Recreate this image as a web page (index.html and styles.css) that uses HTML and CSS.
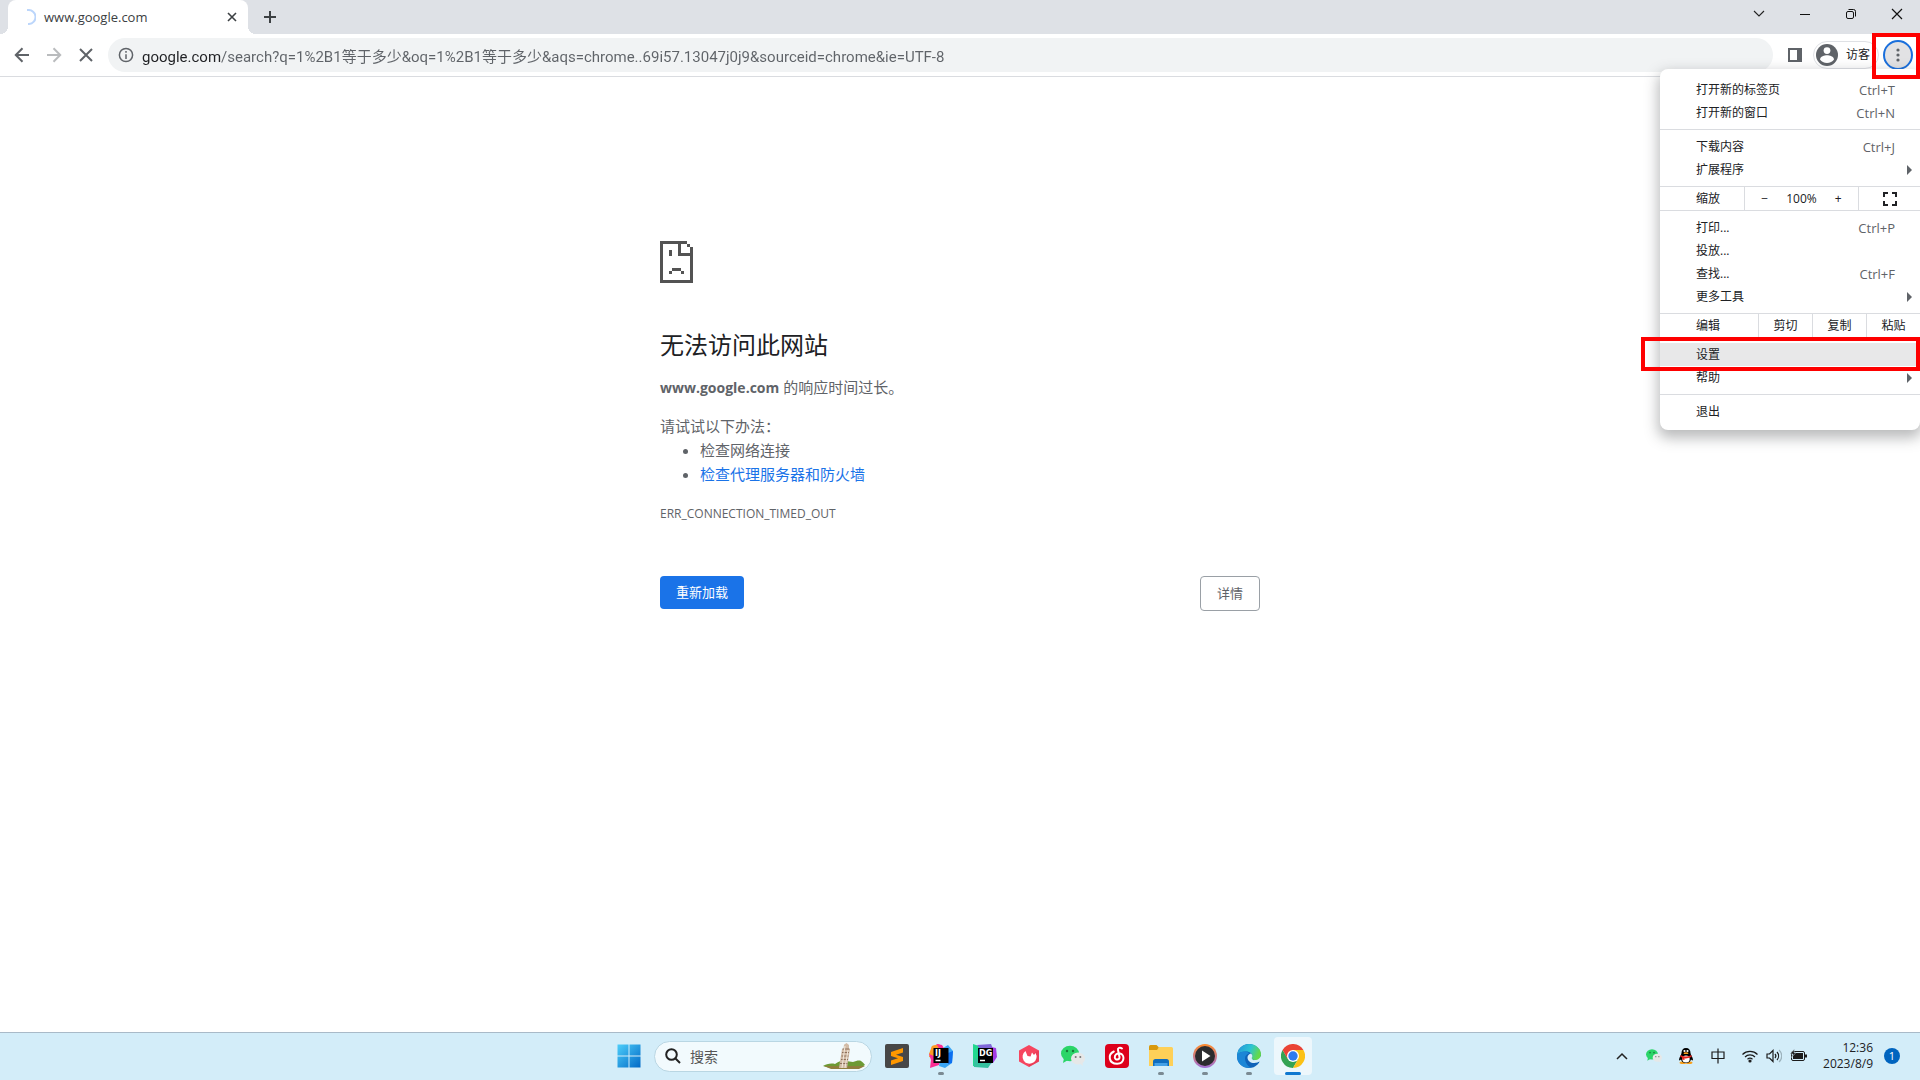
FILE: index.html
```html
<!DOCTYPE html>
<html lang="zh-CN">
<head>
<meta charset="utf-8">
<title>www.google.com</title>
<link rel="stylesheet" href="styles.css">
</head>
<body>
<header class="browser">
  <div class="tabstrip">
    <div class="tab">
      <svg class="spinner" width="16" height="16" viewBox="0 0 16 16" fill="none" stroke="#bcd6fb" stroke-width="2"><path d="M7 1h1a7 7 0 0 1 1 14h-1"/></svg>
      <span class="tab-title">www.google.com</span>
      <button class="icon-btn tab-close" aria-label="关闭标签页"><svg width="10" height="10" viewBox="0 0 10 10" stroke="#3c4043" stroke-width="1.600"><path d="M1 1l8 8M9 1l-8 8"/></svg></button>
    </div>
    <button class="icon-btn new-tab" aria-label="新标签页"><svg width="12" height="12" viewBox="0 0 12 12" stroke="#3c4043" stroke-width="2"><path d="M6 0v12M0 6h12"/></svg></button>
    <div class="window-controls">
      <button class="icon-btn" aria-label="搜索标签页"><svg width="12" height="12" viewBox="0 0 12 12" fill="none" stroke="#222" stroke-width="1.1"><path d="M1 3l5 5 5-5"/></svg></button>
      <button class="icon-btn" aria-label="最小化"><svg width="12" height="12" viewBox="0 0 12 12" stroke="#111"><path d="M1 6.5h10"/></svg></button>
      <button class="icon-btn" aria-label="还原"><svg width="12" height="12" viewBox="0 0 12 12" fill="none" stroke="#111"><rect x="1.500" y="3.500" width="7" height="7" rx="1.500"/><path d="M3.500 1.500h5a2 2 0 0 1 2 2v5"/></svg></button>
      <button class="icon-btn" aria-label="关闭"><svg width="12" height="12" viewBox="0 0 12 12" stroke="#111" stroke-width="1.200"><path d="M1 1l10 10M11 1L1 11"/></svg></button>
    </div>
  </div>
  <div class="toolbar">
    <button class="icon-btn nav-btn" aria-label="后退"><svg width="16" height="16" viewBox="0 0 16 16" fill="none" stroke="#5f6368" stroke-width="2"><path d="M15 8H2M8.500 1.300L1.800 8l6.700 6.700"/></svg></button>
    <button class="icon-btn nav-btn" aria-label="前进"><svg width="16" height="16" viewBox="0 0 16 16" fill="none" stroke="#babcbe" stroke-width="2"><path d="M1 8h13M7.500 1.300L14.200 8l-6.700 6.700"/></svg></button>
    <button class="icon-btn nav-btn" aria-label="停止加载"><svg width="16" height="16" viewBox="0 0 16 16" stroke="#5f6368" stroke-width="2"><path d="M2 2l12 12M14 2L2 14"/></svg></button>
    <div class="omnibox">
      <svg width="16" height="16" viewBox="0 0 16 16" fill="none" stroke="#5f6368" stroke-width="1.500"><circle cx="8" cy="8" r="6.600"/><path d="M8 7.200V12M8 4v1.700"/></svg>
      <input class="url" type="text" aria-label="地址栏" value="google.com/search?q=1%2B1等于多少&amp;oq=1%2B1等于多少&amp;aqs=chrome..69i57.13047j0j9&amp;sourceid=chrome&amp;ie=UTF-8">
    </div>
    <button class="icon-btn side-panel" aria-label="侧边栏"><svg width="14" height="14" viewBox="0 0 14 14"><path fill="#5f6368" fill-rule="evenodd" d="M0 0h14v14H0zM2 2v10h7V2z"/></svg></button>
    <button class="profile"><svg width="22" height="22" viewBox="0 0 22 22"><circle cx="11" cy="11" r="11" fill="#5f6368"/><circle cx="11" cy="6.600" r="3.400" fill="#fff"/><path d="M4 15.500c0-3 4.600-4.200 7-4.200s7 1.200 7 4.200c-1.500 2.200-4 3.600-7 3.600s-5.500-1.400-7-3.600z" fill="#fff"/></svg>访客</button>
    <div class="more-wrap">
      <button class="more" aria-label="自定义及控制"><svg width="4" height="14" viewBox="0 0 4 14" fill="#5f6368"><circle cx="2" cy="2" r="1.600"/><circle cx="2" cy="7" r="1.600"/><circle cx="2" cy="12" r="1.600"/></svg></button>
      <span class="mark mark-more"></span>
    </div>
  </div>
</header>

<nav class="menu" aria-label="主菜单">
  <div class="group">
    <button class="item">打开新的标签页<span class="key">Ctrl+T</span></button>
    <button class="item">打开新的窗口<span class="key">Ctrl+N</span></button>
  </div>
  <div class="group">
    <button class="item">下载内容<span class="key">Ctrl+J</span></button>
    <button class="item">扩展程序<span class="arrow"></span></button>
  </div>
  <div class="split">
    <span class="split-label zoom-label">缩放</span>
    <div class="zoom"><button>−</button><span>100%</span><button>+</button></div>
    <button class="full" aria-label="全屏"><svg width="14" height="14" viewBox="0 0 14 14" fill="none" stroke="#202124" stroke-width="2"><path d="M1 5V1h4M9 1h4v4M13 9v4H9M5 13H1V9"/></svg></button>
  </div>
  <div class="group">
    <button class="item">打印...<span class="key">Ctrl+P</span></button>
    <button class="item">投放...</button>
    <button class="item">查找...<span class="key">Ctrl+F</span></button>
    <button class="item">更多工具<span class="arrow"></span></button>
  </div>
  <div class="split">
    <span class="split-label edit-label">编辑</span>
    <button class="edit">剪切</button><button class="edit">复制</button><button class="edit">粘贴</button>
  </div>
  <div class="group">
    <button class="item active">设置<span class="mark mark-settings"></span></button>
    <button class="item">帮助<span class="arrow"></span></button>
  </div>
  <div class="group">
    <button class="item">退出</button>
  </div>
</nav>

<main class="page">
  <div class="error">
    <svg class="sad" width="33" height="42" viewBox="0 0 11 14" fill="#535353" shape-rendering="crispEdges"><path d="M0 0h9v1H0zM0 1h1v13H0zM1 13h10v1H1zM10 2h1v11h-1zM9 1h1v1H9zM6 1h1v4H6zM7 4h3v1H7zM3 3h1v2H3zM4 9h3v1H4zM3 10h1v1H3zM7 10h1v1H7z"/></svg>
    <h1>无法访问此网站</h1>
    <p><strong>www.google.com</strong> 的响应时间过长。</p>
    <div class="tips">
      <p>请试试以下办法：</p>
      <ul>
        <li>检查网络连接</li>
        <li><a href="#proxy">检查代理服务器和防火墙</a></li>
      </ul>
    </div>
    <p class="code">ERR_CONNECTION_TIMED_OUT</p>
    <div class="actions">
      <button class="reload">重新加载</button>
      <button class="details">详情</button>
    </div>
  </div>
</main>

<footer class="taskbar">
  <div class="apps">
    <button class="app" aria-label="开始"><svg width="24" height="24" viewBox="0 0 24 24"><defs><linearGradient id="win" x1="0" y1="0" x2="24" y2="24" gradientUnits="userSpaceOnUse"><stop stop-color="#4fd0fb"/><stop offset="1" stop-color="#0067c5"/></linearGradient></defs><path fill="url(#win)" d="M.500.500h11v11h-11zM12.500.500h11v11h-11zM.500 12.500h11v11H.500zM12.500 12.500h11v11h-11z"/></svg></button>
    <label class="search">
      <svg width="16" height="16" viewBox="0 0 16 16" fill="none" stroke="#222" stroke-width="2"><circle cx="6.500" cy="6.500" r="5.300"/><path d="M10.500 10.500l4.500 4.500"/></svg>
      <input type="search" placeholder="搜索" aria-label="搜索">
      <svg width="44" height="28" viewBox="0 0 44 28"><path d="M1 24c3-2 8-3 12-2 5-4 8-3 11-3l7 1c3-1 6-2 8-1 2 1 3 3 4 4l-5 3H8z" fill="#6d9a34"/><path d="M2 24h41l-6 3H9z" fill="#8f7f3d"/><path d="M17 26L20 7l1.500-.3.5-4L24.500 1 27 3v4h1l-3 19z" fill="#d2bba6"/><path d="M20.500 7h7M20 10.500h7M19.500 14h7M19 17.500h7M18 21.500h7.500" stroke="#8e705b"/><path d="M23 4l-3 22M26 8l-3 18" stroke="#f3e9dc"/></svg>
    </label>
    <button class="app" aria-label="Sublime Text"><svg width="24" height="24" viewBox="0 0 24 24"><rect width="24" height="24" rx="2" fill="#474747"/><path fill="#ff9800" d="M18 4v4.500l-7 2.200 7 2.300v4L6 21v-4.500l7-2.200-7-2.300V8z"/></svg></button>
    <button class="app open" aria-label="IntelliJ IDEA"><svg width="24" height="24" viewBox="0 0 24 24"><path fill="#fd9b24" d="M3 2l7-2 4 5-8 9-6-1z"/><path fill="#fc2d93" d="M8 0l5 1 3 5-6 15-9 3 1-8-2-6z"/><path fill="#3aa5f5" d="M14 4l5-3 5 6-1 12-7 5-6-2z"/><path fill="#fd9b24" d="M3 2l5-1 3 5-6 6-5-2z"/><path fill="#0d6ff0" d="M19 9l5-2-1 12-4 1z"/><path d="M4.500 4h15v15h-15z"/><path d="M6.500 16.500h5" stroke="#fff" stroke-width="1.500"/><text x="6" y="12" class="glyph">IJ</text></svg></button>
    <button class="app" aria-label="DataGrip"><svg width="24" height="24" viewBox="0 0 24 24"><path fill="#22d88f" d="M0 0l9 3-4 20-5-1z"/><path fill="#7f68d8" d="M4 1l14-1 5 12-5 8z"/><path fill="#35c2a0" d="M1 14l18 4-4 6-14-1z"/><path fill="#a23ce4" d="M18 3l5 1 1 9-4 6z"/><path d="M5 4h15v15H5z"/><path d="M7 16.500h5" stroke="#fff" stroke-width="1.500"/><text x="6" y="12" class="glyph">DG</text></svg></button>
    <button class="app" aria-label="工具箱"><svg width="24" height="24" viewBox="0 0 24 24"><path fill="#f6465f" d="M12 1l10 5.500v11L12 23 2 17.500v-11z"/><path fill="#dc2f4b" d="M12 12l10-5.500v11L12 23z" opacity=".4"/><path d="M8.500 7A7 7 0 1 0 18.500 9l-1.500 2-2-2.500-1.500 4-3-.5z" fill="#fff"/></svg></button>
    <button class="app" aria-label="微信"><svg width="24" height="24" viewBox="0 0 24 24"><use href="#wechat"/></svg></button>
    <button class="app" aria-label="网易云音乐"><svg width="24" height="24" viewBox="0 0 24 24"><rect width="24" height="24" rx="4" fill="#dd001b"/><path fill="none" stroke="#fff" stroke-width="2" stroke-linecap="round" d="M17 4.500c-2-1.500-4.500-.5-4 1.500l1.500 7c.5 3-4.500 3.500-4.700.5-.2-3 2.200-4.500 5.200-4 5 1 5 10-2.800 10.200C3.500 19.800 2.500 10.500 8.800 7.500"/></svg></button>
    <button class="app open" aria-label="文件资源管理器"><svg width="24" height="24" viewBox="0 0 24 24"><path fill="#d9990c" d="M0 2.500Q0 1 1.500 1h6L10 3.500V8H0z"/><path fill="#fed058" d="M0 6h8l2-3h12.500Q24 3 24 4.500V22H0z"/><path fill="#0f6cbd" d="M4 22v-4.500Q4 15 6.500 15h11q2.500 0 2.500 2.500V22z"/><path fill="#44a0e6" d="M5.500 19h13v3h-13z"/></svg></button>
    <button class="app open" aria-label="媒体播放器"><svg width="24" height="24" viewBox="0 0 24 24"><defs><linearGradient id="mp" x2="0" y2="1"><stop stop-color="#ff8b2b"/><stop offset="1" stop-color="#a070d8"/></linearGradient></defs><circle cx="12" cy="12" r="12" fill="url(#mp)"/><circle cx="12" cy="12" r="10" fill="#2c2c2e"/><path fill="#fff" d="M9 6.500l8.500 5.500L9 17.500z"/></svg></button>
    <button class="app open" aria-label="Edge"><svg width="24" height="24" viewBox="0 0 24 24"><defs><linearGradient id="eg" x2="1" y2=".3"><stop stop-color="#2391dc"/><stop offset=".6" stop-color="#2cc4d2"/><stop offset="1" stop-color="#63d94a"/></linearGradient></defs><circle cx="12" cy="12" r="12" fill="#0e62b8"/><path fill="#d3edf9" d="M16 16.500l8-4.500v5l-2 1z"/><path fill="url(#eg)" d="M0 11C1 4 6 0 12 0c7 0 12 5 12 10 0 4-3 6-6 6-3 0-4-1-3-2.500C16.500 10 13 7.500 9 7.500c-4 0-7 1-9 3.500z"/><path fill="#1b86d6" d="M0 11c2-3 6-4 9-3.500 2 .5 3 1.500 3 2-4 1-5 5-3 9 1 2.500 3 4.500 5 5C6 25-1 19 0 11z"/><path fill="#d4edf8" d="M14 9.500c2 1.500 1.500 3.500.8 4.300C14.500 15 16 16.500 18.500 16.500c2 0 3.500-.7 4.500-1.500-.7 2-1.500 3-2.500 3.500-5 1.500-10-.5-10-5 0-2 1.500-3.500 3.500-4z"/></svg></button>
    <button class="app current" aria-label="Chrome"><svg width="24" height="24" viewBox="0 0 24 24"><path fill="#34a353" d="M1.600 6A12 12 0 0 0 12 24l5.200-9H7z"/><path fill="#fbc116" d="M22.400 6A12 12 0 0 1 12 24l5.200-9L12 6z"/><path fill="#ea4335" d="M1.600 6A12 12 0 0 1 22.400 6H12l-5.200 9z"/><circle cx="12" cy="12" r="6" fill="#fff"/><circle cx="12" cy="12" r="4.700" fill="#2e7bf0"/></svg></button>
  </div>
  <div class="tray">
    <button class="tray-btn" aria-label="显示隐藏的图标"><svg width="12" height="12" viewBox="0 0 12 12" fill="none" stroke="#222" stroke-width="1.500"><path d="M1 9l5-5 5 5"/></svg></button>
    <button class="tray-btn" aria-label="微信"><svg width="16" height="16" viewBox="0 0 24 24"><g id="wechat"><ellipse cx="9" cy="9.500" rx="9" ry="7.800" fill="#2bd568"/><path d="M3 14l-1 5 5-3z" fill="#2bd568"/><circle cx="6" cy="7" r="1.200" fill="#17793a"/><circle cx="12" cy="7" r="1.200" fill="#17793a"/><ellipse cx="17" cy="14.500" rx="7" ry="6" fill="#e6e8e8"/><path d="M18 19l4 3-1-5z" fill="#e6e8e8"/><circle cx="14.700" cy="13" r="1" fill="#777"/><circle cx="19.300" cy="13" r="1" fill="#777"/></g></svg></button>
    <button class="tray-btn" aria-label="QQ"><svg width="16" height="16" viewBox="0 0 16 16"><ellipse cx="5" cy="14.800" rx="3.500" ry="1.300" fill="#f9a01b"/><ellipse cx="11" cy="14.800" rx="3.500" ry="1.300" fill="#f9a01b"/><path d="M8 0c3 0 4.500 2 4.500 5 0 2 2.500 4 2.500 7-.5 1-1.500 0-2-.5C12.500 14 10.500 15 8 15s-4.500-1-5-3.500C2.500 12 1.500 13 1 12c0-3 2.500-5 2.500-7 0-3 1.500-5 4.500-5z"/><ellipse cx="8" cy="11" rx="3.700" ry="3.500" fill="#fff"/><circle cx="6.500" cy="3" r="1.100" fill="#fff"/><circle cx="9.500" cy="3" r="1.100" fill="#fff"/><ellipse cx="8" cy="5.200" rx="2.500" ry=".9" fill="#f9a01b"/><path d="M2.500 7q5.500 3 11 0v2q-5 2-7 1.300V12l-2.300-.5V9.500L2.500 9z" fill="#e8221d"/></svg></button>
    <button class="tray-btn" aria-label="输入法"><svg width="14" height="16" viewBox="0 0 14 16" fill="none" stroke="#1b1b1b" stroke-width="1.200"><path d="M1 4h12v6.500H1zM7 .500v15"/></svg></button>
    <button class="status" aria-label="网络、音量、电池">
      <svg width="16" height="14" viewBox="0 0 16 14" fill="none" stroke="#1b1b1b" stroke-width="1.200"><path d="M.500 5.500a10.500 10.500 0 0 1 15 0M3 8a7 7 0 0 1 10 0M5.500 10.300a3.700 3.700 0 0 1 5 0"/><circle cx="8" cy="12" r="1" fill="#1b1b1b"/></svg>
      <svg width="16" height="14" viewBox="0 0 16 14" fill="none" stroke="#1b1b1b" stroke-width="1.200"><path d="M1 5h2.500L7 1.500v11L3.500 9H1zM9 5a3 3 0 0 1 0 4M11 3a6 6 0 0 1 0 8"/><path d="M13 1a8 8 0 0 1 0 12" stroke="#9db3bd"/></svg>
      <svg width="17" height="14" viewBox="0 0 17 14"><rect x="1.500" y="2.500" width="13" height="9" rx="1.500" fill="none" stroke="#1b1b1b"/><path d="M3 4h10v6H3zM15 5.500h2v3h-2z" fill="#1b1b1b"/><path d="M4.500 0L0 5h3L1.500 8.500 6 3.500H4z" fill="#1b1b1b" stroke="#d3edf9" stroke-width=".5"/></svg>
    </button>
    <time class="clock" datetime="2023-08-09T12:36">12:36<br>2023/8/9</time>
    <span class="badge">1</span>
  </div>
</footer>
</body>
</html>
```
FILE: styles.css
```css
* { box-sizing: border-box; }

body {
  margin: 0;
  min-height: 100vh;
  display: flex;
  flex-direction: column;
  position: relative;
  background: #fff;
  color: #202124;
  font: 12px/16px "Open Sans", "Noto Sans CJK SC", sans-serif;
}

button, input {
  margin: 0;
  padding: 0;
  border: 0;
  background: none;
  color: inherit;
  font: inherit;
}

svg { display: block; flex: none; }

.icon-btn { display: grid; place-items: center; }

/* Tab strip */
.tabstrip {
  display: flex;
  height: 34px;
  padding-left: 8px;
  background: #dee1e6;
}

.tab {
  position: relative;
  display: flex;
  align-items: center;
  gap: 8px;
  width: 240px;
  padding: 0 8px 0 12px;
  border-radius: 8px 8px 0 0;
  background: #fff;
}

.tab::before, .tab::after {
  content: "";
  position: absolute;
  bottom: 0;
  width: 8px;
  height: 8px;
}
.tab::before { left: -8px; background: radial-gradient(circle at 0 0, transparent 8px, #fff 8px); }
.tab::after { right: -8px; background: radial-gradient(circle at 100% 0, transparent 8px, #fff 8px); }

.tab-title { flex: 1; color: #3c4043; font-size: 13px; }
.tab-close { width: 16px; height: 16px; }
.new-tab { width: 28px; margin-left: 8px; }
.window-controls { display: flex; height: 28px; margin-left: auto; }
.window-controls .icon-btn { width: 46px; }

/* Toolbar */
.toolbar {
  display: flex;
  align-items: center;
  height: 43px;
  padding-left: 6px;
  border-bottom: 1px solid #dadce0;
}

.nav-btn { width: 32px; height: 32px; }

.omnibox {
  flex: 1;
  display: flex;
  align-items: center;
  gap: 8px;
  height: 34px;
  margin-left: 6px;
  padding: 0 10px;
  border-radius: 17px;
  background: #f1f3f4;
}

.url {
  flex: 1;
  height: 24px;
  font-family: Roboto, "Noto Sans CJK SC", sans-serif;
  font-size: 15px;
  color: transparent;
  background: linear-gradient(to right, #202124 79px, #5f6368 79px);
  background-clip: text;
}

.side-panel { width: 28px; height: 28px; margin: 0 4px 0 8px; }

.profile {
  display: flex;
  align-items: center;
  gap: 8px;
  height: 28px;
  padding: 0 8px 0 2px;
  border: 1px solid #dfe1e5;
  border-radius: 14px;
}

.more-wrap { position: relative; padding: 0 7px 0 4px; }

.more {
  display: grid;
  place-items: center;
  width: 30px;
  height: 30px;
  border: 2px solid #1a6fdc;
  border-radius: 50%;
  background: #e2e2e4;
}

.mark {
  position: absolute;
  z-index: 3;
  border: 4px solid #fe0000;
  pointer-events: none;
}
.mark-more { top: -7px; right: 0; width: 48px; height: 46px; }
.mark-settings { top: -6px; right: 0; bottom: -5px; left: -19px; }

/* Main menu */
.menu {
  position: absolute;
  z-index: 2;
  top: 69px;
  right: 0;
  width: 260px;
  padding: 4px 0 2px;
  border-radius: 8px;
  background: #fff;
  box-shadow: 0 6px 14px 2px rgba(60, 64, 67, .36);
}

.group { padding: 5px 0; }
.group + .group { border-top: 1px solid #dadce0; }

.item {
  position: relative;
  display: flex;
  align-items: center;
  justify-content: space-between;
  width: 100%;
  height: 23px;
  padding: 0 25px 0 36px;
}
.item.active { background: #e8e8e9; }
.key { color: #5f6368; font-size: 13px; }

.arrow {
  position: absolute;
  right: 8px;
  border: 5px solid transparent;
  border-right: 0;
  border-left-color: #5f6368;
}

.split {
  display: flex;
  height: 25px;
  border-top: 1px solid #dadce0;
  border-bottom: 1px solid #dadce0;
}
.split > * { display: flex; align-items: center; justify-content: center; }
.split > * + * { border-left: 1px solid #dadce0; }
.split .split-label { justify-content: flex-start; padding-left: 36px; }
.zoom-label { width: 84px; }
.edit-label { width: 98px; }
.edit { flex: 1; }
.zoom { flex: 1; gap: 18px; }
.full { width: 62px; }

/* Error page */
.page { flex: 1; padding-top: 164px; }

.error {
  width: 100%;
  max-width: 600px;
  margin: 0 auto;
  color: #5f6368;
  font-size: 15px;
  line-height: 24px;
}
.error h1 {
  margin: 44px 0 12px;
  color: #202124;
  font-size: 24px;
  font-weight: 400;
  line-height: 36px;
}
.error p { margin: 0; }
.error strong { font-size: 14px; }
.tips { margin-top: 14px; }
.tips ul { margin: 0; padding-left: 40px; }
.error a { color: #1a73e8; text-decoration: none; }
.error .code { margin-top: 16px; font-size: 12px; }

.actions {
  display: flex;
  align-items: flex-start;
  justify-content: space-between;
  margin-top: 50px;
  font-size: 13px;
  line-height: 17px;
}
.reload { padding: 8px 16px; border-radius: 4px; background: #1a73e8; color: #fff; }
.details { padding: 8px 16px; border: 1px solid #9aa0a6; border-radius: 4px; }

/* Taskbar */
.taskbar {
  display: grid;
  grid-template-columns: 1fr auto 1fr;
  align-items: center;
  height: 48px;
  padding-bottom: 1px;
  border-top: 1px solid #a9bac8;
  background: #d3edf9;
}

.apps { grid-column: 2; display: flex; align-items: center; gap: 6px; padding-left: 2px; }

.app {
  position: relative;
  display: grid;
  place-items: center;
  width: 38px;
  height: 38px;
  border-radius: 4px;
}
.app.open::after, .app.current::after {
  content: "";
  position: absolute;
  bottom: 0;
  left: 16px;
  width: 6px;
  height: 3px;
  border-radius: 2px;
  background: #7b8a93;
}
.app.current { background: #edf7fc; }
.app.current::after { left: 11px; width: 16px; background: #0f78d0; }
.glyph { fill: #fff; font: 700 8px "DejaVu Sans", sans-serif; }

.search {
  display: flex;
  align-items: center;
  gap: 9px;
  width: 218px;
  height: 31px;
  padding: 0 5px 0 10px;
  border: 1px solid #b9d6e3;
  border-radius: 16px;
  background: #f2fafd;
}
.search input { flex: 1; min-width: 0; height: 24px; font-size: 14px; }
.search input::placeholder { color: #555; opacity: 1; }

.tray { display: flex; align-items: center; justify-content: flex-end; padding-right: 20px; }
.tray-btn { display: grid; place-items: center; width: 32px; height: 38px; }
.status { display: flex; gap: 8px; margin: 0 16px 0 8px; }
.clock { text-align: right; }
.badge {
  width: 16px;
  height: 16px;
  margin-left: 11px;
  border-radius: 50%;
  background: #0064bf;
  color: #fff;
  font-size: 11px;
  line-height: 16px;
  text-align: center;
}
```
